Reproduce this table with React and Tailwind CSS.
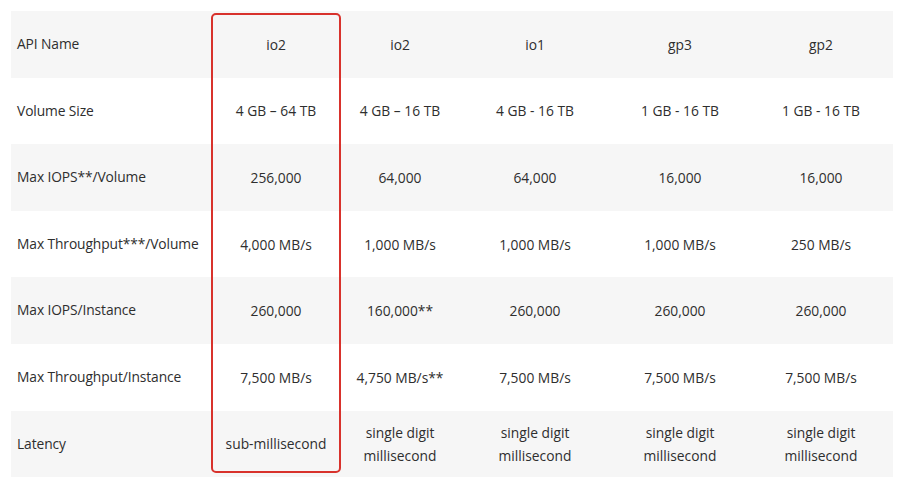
import React from "react";

const rows = [
  ["API Name", "io2", "io2", "io1", "gp3", "gp2"],
  ["Volume Size", "4 GB – 64 TB", "4 GB – 16 TB", "4 GB - 16 TB", "1 GB - 16 TB", "1 GB - 16 TB"],
  ["Max IOPS**/Volume", "256,000", "64,000", "64,000", "16,000", "16,000"],
  ["Max Throughput***/Volume", "4,000 MB/s", "1,000 MB/s", "1,000 MB/s", "1,000 MB/s", "250 MB/s"],
  ["Max IOPS/Instance", "260,000", "160,000**", "260,000", "260,000", "260,000"],
  ["Max Throughput/Instance", "7,500 MB/s", "4,750 MB/s**", "7,500 MB/s", "7,500 MB/s", "7,500 MB/s"],
  ["Latency", "sub-millisecond", "single digit\nmillisecond", "single digit\nmillisecond", "single digit\nmillisecond", "single digit\nmillisecond"],
];

export default function App() {
  return (
    <div
      className="w-[900px] h-[484px] bg-white pt-[11px] pl-[11px] text-[#2e2e2e]"
      style={{ fontFamily: '"Open Sans", "Noto Sans", sans-serif' }}
    >
      <div className="relative w-[882px]">
        <div className="flex flex-col">
          {rows.map((r, i) => (
            <div
              key={i}
              className={`grid grid-cols-[200px_130px_118px_152px_138px_144px] h-[66.6px] items-center text-[13.8px] font-medium ${
                i % 2 === 0 ? "bg-[#f6f6f6]" : "bg-white"
              }`}
            >
              {r.map((c, j) =>
                j === 0 ? (
                  <div key={j} className="pl-[6px] whitespace-nowrap tracking-[-0.1px]">{c}</div>
                ) : (
                  <div key={j} className="text-center whitespace-pre-line leading-[23px]">
                    {c}
                  </div>
                )
              )}
            </div>
          ))}
        </div>
        <div className="absolute left-[200px] top-[2px] w-[130px] h-[460px] border-2 border-[#d8322c] rounded-[5px]"></div>
      </div>
    </div>
  );
}
